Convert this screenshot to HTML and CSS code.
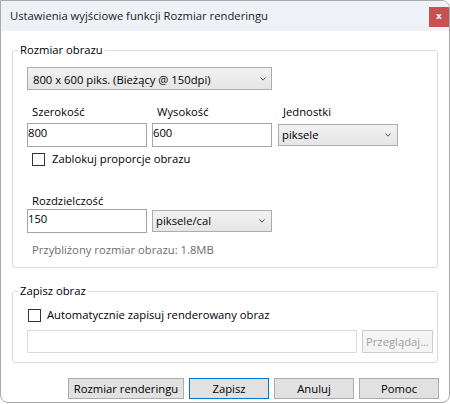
FILE: index.html
```html
<!DOCTYPE html>
<html lang="pl">
<head>
<meta charset="utf-8">
<title>Ustawienia wyjściowe funkcji Rozmiar renderingu</title>
<link rel="stylesheet" href="styles.css">
</head>
<body>
<div class="window">
  <div class="titlebar">
    <span class="title">Ustawienia wyjściowe funkcji Rozmiar renderingu</span>
    <div class="close">x</div>
  </div>
  <div class="content">
    <div class="group">
      <div class="group-title">Rozmiar obrazu</div>
      <div class="combo combo-preset">
        <span>800 x 600 piks. (Bieżący @ 150dpi)</span>
        <svg class="chev" width="6" height="4" viewBox="0 0 6 4"><path d="M0.5 0.5 L3 3.2 L5.5 0.5" fill="none" stroke="#555" stroke-width="1"/></svg>
      </div>
      <div class="field-grid size-grid">
        <div class="field-label">Szerokość</div>
        <div class="field-label">Wysokość</div>
        <div class="field-label">Jednostki</div>
        <div class="textbox">800</div>
        <div class="textbox">600</div>
        <div class="combo combo-small">
          <span>piksele</span>
          <svg class="chev" width="6" height="4" viewBox="0 0 6 4"><path d="M0.5 0.5 L3 3.2 L5.5 0.5" fill="none" stroke="#555" stroke-width="1"/></svg>
        </div>
      </div>
      <div class="check-row lock-row">
        <span class="checkbox"></span>
        <span>Zablokuj proporcje obrazu</span>
      </div>
      <div class="field-grid res-grid">
        <div class="field-label full">Rozdzielczość</div>
        <div class="textbox">150</div>
        <div class="combo combo-small">
          <span>piksele/cal</span>
          <svg class="chev" width="6" height="4" viewBox="0 0 6 4"><path d="M0.5 0.5 L3 3.2 L5.5 0.5" fill="none" stroke="#555" stroke-width="1"/></svg>
        </div>
      </div>
      <div class="hint">Przybliżony rozmiar obrazu: 1.8MB</div>
    </div>

    <div class="group group-save">
      <div class="group-title">Zapisz obraz</div>
      <div class="check-row save-row">
        <span class="checkbox"></span>
        <span>Automatycznie zapisuj renderowany obraz</span>
      </div>
      <div class="path-row">
        <div class="path-box"></div>
        <div class="btn btn-disabled">Przeglądaj...</div>
      </div>
    </div>

    <div class="button-row">
      <div class="btn btn-wide">Rozmiar renderingu</div>
      <div class="btn btn-default">Zapisz</div>
      <div class="btn">Anuluj</div>
      <div class="btn">Pomoc</div>
    </div>
  </div>
</div>
</body>
</html>
```

FILE: styles.css
```css
html, body {
  margin: 0;
  padding: 0;
  background: #ffffff;
}

body {
  font-family: "Open Sans", "Noto Sans", sans-serif;
  font-size: 11.25px;
  line-height: 16px;
  color: #000000;
}

.window {
  box-sizing: border-box;
  width: 450px;
  height: 403px;
  border: 1px solid #a9a9a9;
  border-radius: 0 8px 8px 8px;
  background: #ffffff;
  overflow: hidden;
}

.titlebar {
  display: flex;
  height: 30px;
  align-items: center;
  background: #eef2f7;
}

.title {
  padding-left: 9px;
  color: #1a1a1a;
}

.close {
  align-self: flex-start;
  margin: 6px 0 0 auto;
  width: 20px;
  height: 20px;
  background: #c75050;
  color: #ffffff;
  font-family: "DejaVu Sans", sans-serif;
  font-weight: bold;
  font-size: 9px;
  line-height: 19px;
  text-align: center;
}

.content {
  padding: 0 11px;
}

.group {
  margin-top: 19px;
  border: 1px solid #d8dde3;
  border-radius: 3px;
  padding: 0 4px 9px 14px;
}

.group-title {
  width: fit-content;
  margin: -9px 0 0 -9px;
  padding: 0 2px;
  background: #ffffff;
}

.combo {
  box-sizing: border-box;
  display: flex;
  align-items: center;
  justify-content: space-between;
  border: 1px solid #acacac;
  background: linear-gradient(#f2f2f2, #e5e5e5);
}

.combo-preset {
  margin-top: 9px;
  width: 245px;
  height: 23px;
  padding: 2px 5px 0 5px;
}

.combo-preset .chev {
  margin-top: -2px;
}

.combo-small {
  width: 120px;
  height: 22px;
  padding: 0 6px 0 3px;
}

.field-grid {
  display: grid;
  grid-template-columns: 125px 126px 120px;
  align-items: center;
}

.size-grid {
  margin-top: 14px;
  row-gap: 3px;
}

.res-grid {
  margin-top: 26px;
}

.field-label {
  padding-left: 5px;
}

.field-label.full {
  grid-column: 1 / -1;
}

.textbox {
  box-sizing: border-box;
  width: 120px;
  height: 24px;
  border: 1px solid #a5a5a5;
  background: #ffffff;
  padding: 1px 1px 0 0;
}

.check-row {
  display: flex;
  align-items: flex-start;
}

.checkbox {
  box-sizing: border-box;
  width: 13px;
  height: 13px;
  margin-top: 2px;
  border: 1px solid #333333;
  background: #ffffff;
}

.lock-row {
  margin-top: 4px;
  padding-left: 5px;
  gap: 7px;
}

.hint {
  margin-top: 9px;
  padding-left: 5px;
  color: #6d6d6d;
}

.group-save {
  margin-top: 23px;
}

.save-row {
  margin-top: 8px;
  padding-left: 1px;
  gap: 6px;
}

.path-row {
  display: flex;
  gap: 5px;
  margin-top: 7px;
}

.path-box {
  box-sizing: border-box;
  width: 330px;
  height: 23px;
  border: 1px solid #d9d9d9;
  background: #ffffff;
}

.btn {
  box-sizing: border-box;
  display: flex;
  align-items: center;
  justify-content: center;
  width: 80px;
  height: 21px;
  border: 1px solid #adadad;
  background: #e1e1e1;
}

.btn-disabled {
  width: 71px;
  height: 23px;
  border-color: #cccccc;
  background: #f4f4f4;
  color: #a0a0a0;
}

.button-row {
  display: flex;
  justify-content: flex-end;
  gap: 5px;
  margin: 15px -1px 0 0;
}

.btn-wide {
  width: 116px;
}

.btn-default {
  border-color: #0078d7;
}
```
